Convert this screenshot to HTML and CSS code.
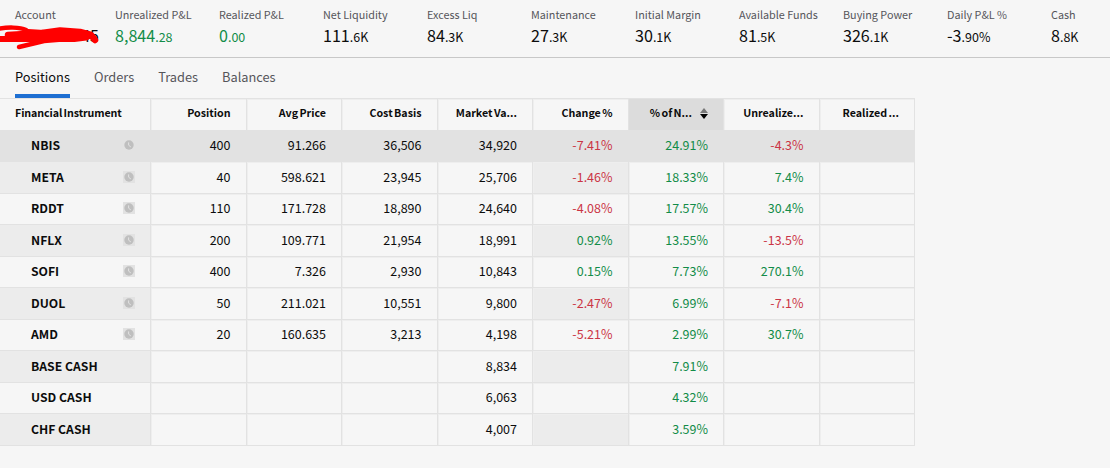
FILE: index.html
```html
<!DOCTYPE html>
<html lang="en">
<head>
<meta charset="UTF-8" />
<meta name="viewport" content="width=device-width, initial-scale=1" />
<title>Portfolio</title>
<link rel="stylesheet" href="styles.css">
</head>
<body>

<!-- clock icon shared by the instrument rows -->
<svg class="defs" width="0" height="0">
  <symbol id="clock" viewBox="0 0 12 12">
    <circle cx="6" cy="6" r="4.7" fill="#bfbfbf" />
    <path d="M5.6 3.4V6.2L7.9 8" fill="none" stroke="#e2e2e2" stroke-width="1" />
  </symbol>
</svg>

<header class="summary">
  <div class="stat account">
    <div class="label">Account</div>
    <div class="value">45</div>
    <svg class="scribble" width="100" height="30" viewBox="0 0 100 30" fill="none" stroke="#f00" stroke-linecap="round" stroke-linejoin="round">
      <path d="M-3 5C7 3 20 3 26 6" stroke-width="4.5" />
      <path d="M-3 15H24" stroke-width="6" />
      <path d="M8 11L42 9L60 6.5L80 8L91 11L95 16" stroke-width="6.5" />
      <path d="M24 13H74L86 11.5" stroke-width="10" />
      <path d="M19 23L44 17L68 15" stroke-width="4.5" />
      <path d="M28 10L60 12" stroke-width="10" />
    </svg>
  </div>
  <div class="stat">
    <div class="label">Unrealized P&amp;L</div>
    <div class="value up">8,844<small>.28</small></div>
  </div>
  <div class="stat">
    <div class="label">Realized P&amp;L</div>
    <div class="value up">0<small>.00</small></div>
  </div>
  <div class="stat">
    <div class="label">Net Liquidity</div>
    <div class="value">111<small>.6K</small></div>
  </div>
  <div class="stat">
    <div class="label">Excess Liq</div>
    <div class="value">84<small>.3K</small></div>
  </div>
  <div class="stat">
    <div class="label">Maintenance</div>
    <div class="value">27<small>.3K</small></div>
  </div>
  <div class="stat">
    <div class="label">Initial Margin</div>
    <div class="value">30<small>.1K</small></div>
  </div>
  <div class="stat">
    <div class="label">Available Funds</div>
    <div class="value">81<small>.5K</small></div>
  </div>
  <div class="stat">
    <div class="label">Buying Power</div>
    <div class="value">326<small>.1K</small></div>
  </div>
  <div class="stat">
    <div class="label">Daily P&amp;L %</div>
    <div class="value">-3<small>.90%</small></div>
  </div>
  <div class="stat">
    <div class="label">Cash</div>
    <div class="value">8<small>.8K</small></div>
  </div>
</header>

<nav class="tabs">
  <a class="tab active">Positions</a>
  <a class="tab">Orders</a>
  <a class="tab">Trades</a>
  <a class="tab">Balances</a>
</nav>

<main class="positions">
  <div class="row head">
    <div>Financial Instrument</div>
    <div>Position</div>
    <div>Avg Price</div>
    <div>Cost Basis</div>
    <div>Market Va...</div>
    <div>Change %</div>
    <div class="sorted">% of N...
      <svg class="sort" width="8" height="11" viewBox="0 0 8 11">
        <path d="M4 0L8 5H0Z" fill="#777" />
        <path d="M4 11L8 6H0Z" fill="#000" />
      </svg>
    </div>
    <div>Unrealize...</div>
    <div>Realized ...</div>
  </div>
  <div class="row selected">
    <div class="name">NBIS <svg class="clock"><use href="#clock" /></svg></div>
    <div>400</div><div>91.266</div><div>36,506</div><div>34,920</div>
    <div class="down">-7.41%</div><div class="up">24.91%</div><div class="down">-4.3%</div><div></div>
  </div>
  <div class="row">
    <div class="name">META <svg class="clock"><use href="#clock" /></svg></div>
    <div>40</div><div>598.621</div><div>23,945</div><div>25,706</div>
    <div class="down">-1.46%</div><div class="up">18.33%</div><div class="up">7.4%</div><div></div>
  </div>
  <div class="row">
    <div class="name">RDDT <svg class="clock"><use href="#clock" /></svg></div>
    <div>110</div><div>171.728</div><div>18,890</div><div>24,640</div>
    <div class="down">-4.08%</div><div class="up">17.57%</div><div class="up">30.4%</div><div></div>
  </div>
  <div class="row">
    <div class="name">NFLX <svg class="clock"><use href="#clock" /></svg></div>
    <div>200</div><div>109.771</div><div>21,954</div><div>18,991</div>
    <div class="up">0.92%</div><div class="up">13.55%</div><div class="down">-13.5%</div><div></div>
  </div>
  <div class="row">
    <div class="name">SOFI <svg class="clock"><use href="#clock" /></svg></div>
    <div>400</div><div>7.326</div><div>2,930</div><div>10,843</div>
    <div class="up">0.15%</div><div class="up">7.73%</div><div class="up">270.1%</div><div></div>
  </div>
  <div class="row">
    <div class="name">DUOL <svg class="clock"><use href="#clock" /></svg></div>
    <div>50</div><div>211.021</div><div>10,551</div><div>9,800</div>
    <div class="down">-2.47%</div><div class="up">6.99%</div><div class="down">-7.1%</div><div></div>
  </div>
  <div class="row">
    <div class="name">AMD <svg class="clock"><use href="#clock" /></svg></div>
    <div>20</div><div>160.635</div><div>3,213</div><div>4,198</div>
    <div class="down">-5.21%</div><div class="up">2.99%</div><div class="up">30.7%</div><div></div>
  </div>
  <div class="row">
    <div class="name">BASE CASH</div>
    <div></div><div></div><div></div><div>8,834</div>
    <div></div><div class="up">7.91%</div><div></div><div></div>
  </div>
  <div class="row">
    <div class="name">USD CASH</div>
    <div></div><div></div><div></div><div>6,063</div>
    <div></div><div class="up">4.32%</div><div></div><div></div>
  </div>
  <div class="row">
    <div class="name">CHF CASH</div>
    <div></div><div></div><div></div><div>4,007</div>
    <div></div><div class="up">3.59%</div><div></div><div></div>
  </div>
</main>

</body>
</html>
```
FILE: styles.css
```css
* {
  box-sizing: border-box;
}
body {
  margin: 0;
  background: #f6f6f6;
  color: #0c0c0c;
  font-family: "Noto Sans CJK SC", "Noto Sans", sans-serif;
  font-size: 12.5px;
  line-height: 18px;
  overflow: hidden;
}
.defs {
  display: block;
}
.up {
  color: #128c48;
}
.down {
  color: #cb3545;
}

/* account summary */
.summary {
  display: grid;
  grid-template-columns: 100px repeat(10, 104px);
  height: 58px;
  padding: 5px 0 0 15px;
  border-bottom: 1px solid #c8c8c8;
}
.label {
  font-size: 10.8px;
  color: #55555a;
  white-space: nowrap;
}
.value {
  font-size: 16.1px;
  line-height: 24px;
}
.value small {
  font-size: 12.5px;
}
.account {
  position: relative;
}
.account .value {
  width: 84px;
  text-align: right;
}
.scribble {
  position: absolute;
  left: -15px;
  top: 19px;
}

/* tabs */
.tabs {
  display: flex;
  gap: 24px;
  height: 40px;
  padding-left: 15px;
}
.tab {
  height: 40px;
  padding-top: 10px;
  border-bottom: 4px solid transparent;
  color: #55555a;
  font-size: 12.8px;
}
.tab.active {
  color: #0c0c0c;
  border-color: #1e6fd2;
}

/* positions table */
.positions {
  width: 915px;
  border-top: 1px solid #e2e2e2;
}
.row {
  display: grid;
  grid-template-columns: 151px repeat(8, 95.5px);
  height: 31.5px;
}
.row > div {
  display: flex;
  align-items: center;
  justify-content: flex-end;
  padding-right: 15px;
  padding-bottom: 1px;
  border-right: 1px solid #e2e2e2;
  border-bottom: 1px solid #e2e2e2;
  box-shadow: inset 1px 1px 0 #eee;
  white-space: nowrap;
}
.row > div:first-child {
  box-shadow: none;
}
.row .name {
  justify-content: space-between;
  padding-left: 31px;
  font-size: 12.2px;
  font-weight: 700;
}
.row:nth-child(odd) > .name,
.row:nth-child(odd) > div:nth-child(6) {
  background: #ececec;
}
.row.head > div {
  padding-bottom: 2px;
  font-size: 10.7px;
  font-weight: 700;
  word-spacing: -1px;
}
.row.head > div:first-child {
  justify-content: flex-start;
  padding-left: 15px;
  letter-spacing: -0.1px;
}
.row.head > div:nth-child(6) {
  background: #f6f6f6;
}
.row.head > .sorted {
  background: #dcdcdc;
  box-shadow: none;
}
.sort {
  margin-left: 8px;
}
.row.selected > div {
  background: #e2e2e2;
  box-shadow: none;
}
.clock {
  width: 12px;
  height: 12px;
  background: #e2e2e2;
}
```
